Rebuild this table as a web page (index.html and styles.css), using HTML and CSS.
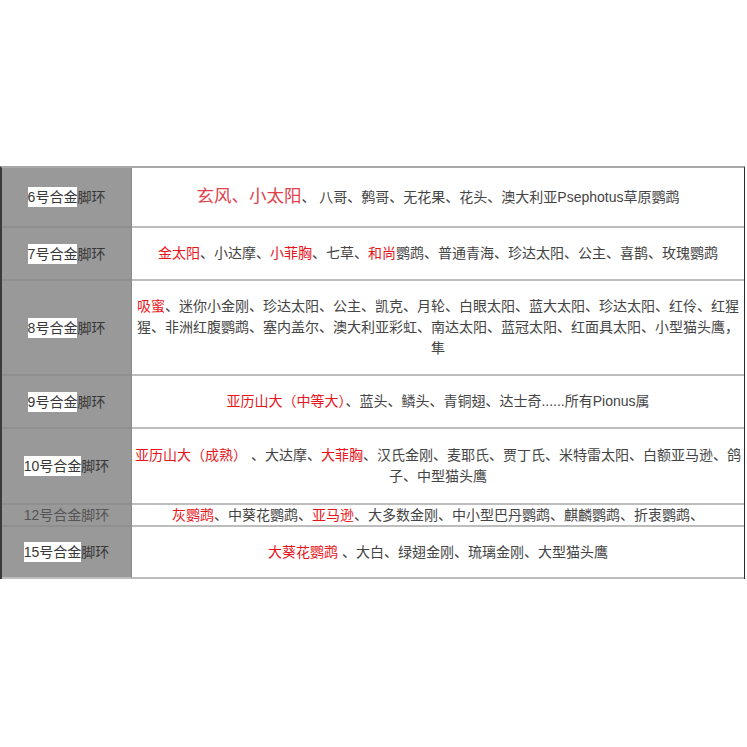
FILE: index.html
```html
<!DOCTYPE html>
<html>
<head>
<meta charset="utf-8">
<link rel="stylesheet" href="styles.css">
</head>
<body>
<div class="table">
  <div class="row r1">
    <div class="label"><span class="hl">6号合金</span>脚环</div>
    <div class="cell"><div class="txt"><span class="big">玄风、小太阳</span>、 八哥、鹩哥、无花果、花头、澳大利亚Psephotus草原鹦鹉</div></div>
  </div>
  <div class="row r2">
    <div class="label"><span class="hl">7号合金</span>脚环</div>
    <div class="cell"><div class="txt"><span class="red">金太阳</span>、小达摩、<span class="red">小菲胸</span>、七草、<span class="red">和尚</span>鹦鹉、普通青海、珍达太阳、公主、喜鹊、玫瑰鹦鹉</div></div>
  </div>
  <div class="row r3">
    <div class="label"><span class="hl">8号合金</span>脚环</div>
    <div class="cell"><div class="txt"><span class="red">吸蜜</span>、迷你小金刚、珍达太阳、公主、凯克、月轮、白眼太阳、蓝大太阳、珍达太阳、红伶、红猩猩、非洲红腹鹦鹉、塞内盖尔、澳大利亚彩虹、南达太阳、蓝冠太阳、红面具太阳、小型猫头鹰，隼</div></div>
  </div>
  <div class="row r4">
    <div class="label"><span class="hl">9号合金</span>脚环</div>
    <div class="cell"><div class="txt"><span class="red">亚历山大（中等大）</span>、蓝头、鳞头、青铜翅、达士奇......所有Pionus属</div></div>
  </div>
  <div class="row r5">
    <div class="label"><span class="hl">10号合金</span>脚环</div>
    <div class="cell"><div class="txt"><span class="red">亚历山大（成熟）</span> 、大达摩、<span class="red">大菲胸</span>、汉氏金刚、麦耶氏、贾丁氏、米特雷太阳、白额亚马逊、鸽子、中型猫头鹰</div></div>
  </div>
  <div class="row r6">
    <div class="label dim">12号合金脚环</div>
    <div class="cell"><div class="txt"><span class="red">灰鹦鹉</span>、中葵花鹦鹉、<span class="red">亚马逊</span>、大多数金刚、中小型巴丹鹦鹉、麒麟鹦鹉、折衷鹦鹉、</div></div>
  </div>
  <div class="row r7">
    <div class="label"><span class="hl">15号合金</span>脚环</div>
    <div class="cell"><div class="txt"><span class="red">大葵花鹦鹉</span> 、大白、绿翅金刚、琉璃金刚、大型猫头鹰</div></div>
  </div>
</div>
</body>
</html>
```
FILE: styles.css
```css
html, body {
  margin: 0;
  padding: 0;
  background: #ffffff;
}
body {
  font-family: "Liberation Sans", "Noto Sans CJK SC", sans-serif;
  font-size: 14px;
  color: #444444;
}
.table {
  margin-top: 166px;
  width: 745px;
  border-top: 2px solid #a8a8a8;
  border-left: 2px solid #3a3a3a;
  border-right: 1px solid #2a2a2a;
  box-sizing: border-box;
}
.row {
  display: grid;
  grid-template-columns: 130px 1fr;
}
.label {
  background: #999999;
  border-right: 1px solid #8a8a8a;
  border-bottom: 2px solid #8f8f8f;
  display: flex;
  align-items: center;
  justify-content: center;
  color: #383838;
  line-height: 20px;
}
.label.dim {
  color: #555555;
}
.hl {
  background: #ffffff;
}
.cell {
  border-bottom: 2px solid #bdbdbd;
  display: flex;
  align-items: center;
  padding: 0 2px;
}
.txt {
  width: 100%;
  text-align: center;
  line-height: 21px;
}
.red {
  color: #e8151b;
}
.big {
  color: #e0424c;
  font-size: 17.5px;
}
.r1 { height: 60px; }
.r2 { height: 53px; }
.r3 { height: 95px; }
.r4 { height: 53px; }
.r5 { height: 76px; }
.r6 { height: 22px; }
.r6 .txt { line-height: 20px; }
.r7 { height: 52px; }
.r7 .label, .r7 .cell { border-bottom-color: #bdbdbd; }
```
